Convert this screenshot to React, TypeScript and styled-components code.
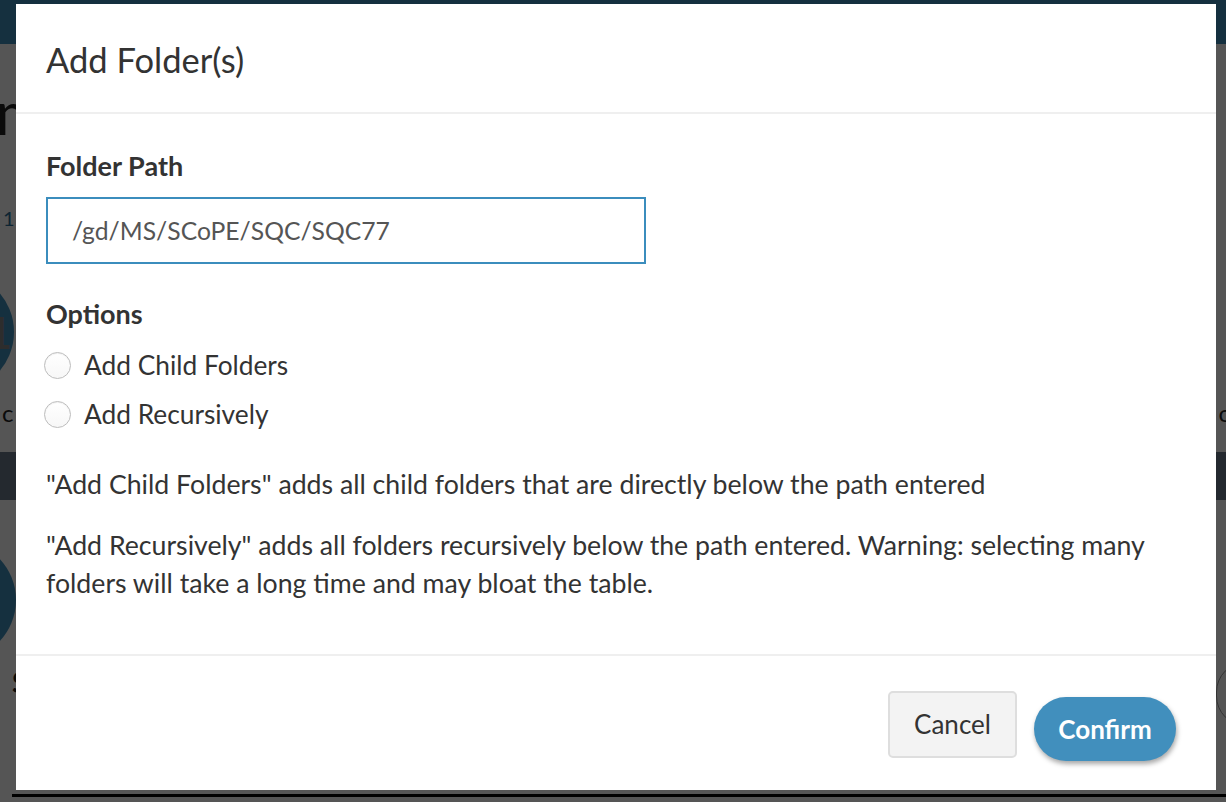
import React from "react";
import styled, { createGlobalStyle } from "styled-components";

const Global = createGlobalStyle`
  html, body { margin: 0; padding: 0; }
  body {
    width: 1226px;
    height: 802px;
    overflow: hidden;
    font-family: Lato, "Liberation Sans", sans-serif;
    background: #ffffff;
  }
  * { box-sizing: border-box; }
`;

const Page = styled.div`
  width: 1226px;
  height: 802px;
  display: flex;
  flex-direction: column;
  background: #ffffff;
  overflow: hidden;
  & > * { flex-shrink: 0; }
`;

const TopBar = styled.div`
  height: 44px;
  background: #3f90bd;
`;

const PageTitle = styled.h1`
  margin: 38px 0 0 -89px;
  height: 60px;
  font-size: 60px;
  font-weight: 400;
  line-height: 1;
  color: #222;
  white-space: nowrap;
`;

const CrumbRow = styled.div`
  margin: 64px 0 0 3px;
  height: 24px;
  font-size: 20px;
  line-height: 24px;
  color: #2a6f98;
`;

const StepRow = styled.div<{ $shift: number; $gap: number }>`
  margin-top: ${(p) => p.$gap}px;
  display: flex;
  align-items: center;
  margin-left: ${(p) => p.$shift}px;
`;

const StepCircle = styled.div`
  width: 120px;
  height: 120px;
  border-radius: 50%;
  background: #3f90bd;
  color: #888;
  font-size: 44px;
  font-weight: 700;
  display: flex;
  align-items: center;
  justify-content: flex-end;
  padding-right: 2px;
`;

const LabelRow = styled.div`
  margin-top: 6px;
  height: 30px;
  display: flex;
  justify-content: space-between;
  font-size: 24px;
  line-height: 30px;
  color: #222;
  padding: 0 0 0 2px;
  margin-right: -6px;
`;

const DarkBand = styled.div`
  margin-top: 24px;
  height: 48px;
  background: #6c7b8d;
`;

const BottomRow = styled.div`
  margin-top: -22px;
  display: flex;
  justify-content: space-between;
  align-items: center;
  font-size: 28px;
  font-weight: 700;
  padding-left: 12px;
  color: #222;
`;

const OutlinePill = styled.div`
  width: 60px;
  height: 64px;
  margin: 24px -50px 0 0;
  border: 1px solid #999;
  border-radius: 30px;
`;

const BottomLine = styled.div`
  margin: auto 0 5px 12px;
  height: 3px;
  background: #000;
`;

const Overlay = styled.div`
  position: fixed;
  inset: 0;
  background: rgba(0, 0, 0, 0.667);
  display: flex;
  justify-content: flex-start;
  align-items: flex-start;
  padding: 4px 0 0 16px;
`;

const Dialog = styled.div`
  width: 1200px;
  height: 786px;
  background: #ffffff;
  display: flex;
  flex-direction: column;
  color: #333;
`;

const Header = styled.div`
  height: 110px;
  flex: none;
  display: flex;
  align-items: center;
  padding: 0 30px;
  border-bottom: 2px solid #efefef;
`;

const Title = styled.h4`
  margin: 2px 0 0;
  font-size: 34.5px;
  font-weight: 400;
  color: #333;
`;

const Body = styled.div`
  flex: 1;
  padding: 34px 30px 0;
  display: flex;
  flex-direction: column;
  border-bottom: 2px solid #efefef;
`;

const FieldLabel = styled.div`
  font-size: 27px;
  font-weight: 700;
  line-height: 36px;
  color: #333;
`;

const PathInput = styled.input`
  margin-top: 13px;
  width: 600px;
  height: 67px;
  border: 2px solid #3b8dbd;
  padding: 0 24px;
  font-family: inherit;
  font-size: 24.7px;
  color: #555;
  outline: none;
`;

const OptionsLabel = styled(FieldLabel)`
  margin-top: 32px;
`;

const RadioList = styled.div`
  display: flex;
  flex-direction: column;
  gap: 13px;
  margin-top: 15px;
`;

const RadioRow = styled.label`
  display: flex;
  align-items: center;
  gap: 13px;
  font-size: 26.3px;
  line-height: 36px;
  color: #333;
`;

const RadioCircle = styled.span`
  width: 27px;
  height: 27px;
  margin-left: -2px;
  border-radius: 50%;
  border: 1px solid #bdbdbd;
  background: linear-gradient(#ffffff, #f7f7f7);
  box-shadow: inset 0 1px 1px rgba(0, 0, 0, 0.06);
  flex: none;
`;

const Help = styled.p<{ $first?: boolean }>`
  margin: ${(p) => (p.$first ? "33px" : "23px")} 0 0;
  font-size: 26.7px;
  line-height: 38px;
  color: #333;
`;

const Footer = styled.div`
  height: 134px;
  flex: none;
  display: flex;
  justify-content: flex-end;
  align-items: center;
  gap: 17px;
  padding: 8px 40px 0 0;
`;

const CancelButton = styled.button`
  width: 129px;
  height: 67px;
  margin-top: -6px;
  border: 2px solid #dedede;
  border-radius: 5px;
  background: #f3f3f3;
  font-family: inherit;
  font-size: 26px;
  color: #333;
`;

const ConfirmButton = styled.button`
  width: 142px;
  height: 64px;
  margin-top: 4px;
  border: none;
  border-radius: 32px;
  background: #418fbd;
  color: #fff;
  font-family: inherit;
  font-size: 26px;
  font-weight: 700;
  box-shadow: 1px 3px 5px rgba(0, 0, 0, 0.35);
`;

export default function App() {
  return (
    <>
      <Global />
      <Page>
        <TopBar />
        <PageTitle>Mam</PageTitle>
        <CrumbRow>1</CrumbRow>
        <StepRow $shift={-106} $gap={42}>
          <StepCircle>1</StepCircle>
        </StepRow>
        <LabelRow>
          <span>c</span>
          <span>o</span>
        </LabelRow>
        <DarkBand />
        <StepRow $shift={-104} $gap={40}>
          <StepCircle />
        </StepRow>
        <BottomRow>
          <span>S</span>
          <OutlinePill />
        </BottomRow>
        <BottomLine />
      </Page>
      <Overlay>
        <Dialog role="dialog">
          <Header>
            <Title>Add Folder(s)</Title>
          </Header>
          <Body>
            <FieldLabel>Folder Path</FieldLabel>
            <PathInput defaultValue="/gd/MS/SCoPE/SQC/SQC77" />
            <OptionsLabel>Options</OptionsLabel>
            <RadioList>
              <RadioRow>
                <RadioCircle />
                Add Child Folders
              </RadioRow>
              <RadioRow>
                <RadioCircle />
                Add Recursively
              </RadioRow>
            </RadioList>
            <Help $first>
              "Add Child Folders" adds all child folders that are directly below the path entered
            </Help>
            <Help>
              "Add Recursively" adds all folders recursively below the path entered. Warning: selecting many
              folders will take a long time and may bloat the table.
            </Help>
          </Body>
          <Footer>
            <CancelButton>Cancel</CancelButton>
            <ConfirmButton>Confirm</ConfirmButton>
          </Footer>
        </Dialog>
      </Overlay>
    </>
  );
}
